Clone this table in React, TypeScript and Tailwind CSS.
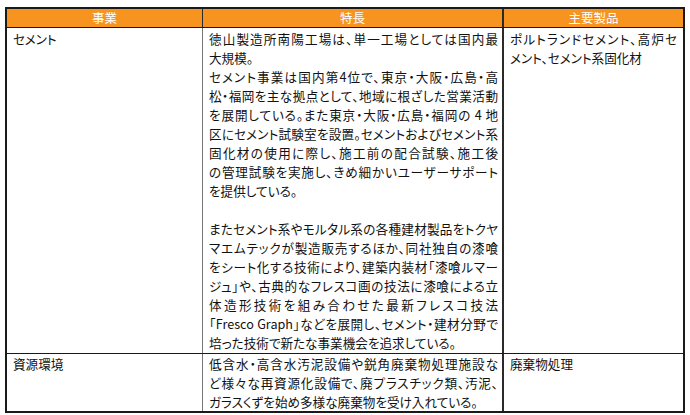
import React from "react";

type Line = { t: string; j?: boolean };

const row1: Line[] = [
  { t: "徳山製造所南陽工場は、単一工場としては国内最", j: true },
  { t: "大規模。" },
  { t: "セメント事業は国内第4位で、東京・大阪・広島・高", j: true },
  { t: "松・福岡を主な拠点として、地域に根ざした営業活動", j: true },
  { t: "を展開している。また東京・大阪・広島・福岡の 4 地", j: true },
  { t: "区にセメント試験室を設置。セメントおよびセメント系", j: true },
  { t: "固化材の使用に際し、施工前の配合試験、施工後", j: true },
  { t: "の管理試験を実施し、きめ細かいユーザーサポート", j: true },
  { t: "を提供している。" },
  { t: "\u00a0" },
  { t: "またセメント系やモルタル系の各種建材製品をトクヤ", j: true },
  { t: "マエムテックが製造販売するほか、同社独自の漆喰", j: true },
  { t: "をシート化する技術により、建築内装材「漆喰ルマー", j: true },
  { t: "ジュ」や、古典的なフレスコ画の技法に漆喰による立", j: true },
  { t: "体造形技術を組み合わせた最新フレスコ技法", j: true },
  { t: "「Fresco Graph」などを展開し、セメント・建材分野で", j: true },
  { t: "培った技術で新たな事業機会を追求している。" },
];

const row2: Line[] = [
  { t: "低含水・高含水汚泥設備や鋭角廃棄物処理施設な", j: true },
  { t: "ど様々な再資源化設備で、廃プラスチック類、汚泥、", j: true },
  { t: "ガラスくずを始め多様な廃棄物を受け入れている。" },
];

function Lines({ lines }: { lines: Line[] }) {
  return (
    <>
      {lines.map((l, i) => (
        <div
          key={i}
          className={
            l.j
              ? "whitespace-nowrap text-justify [text-align-last:justify]"
              : "whitespace-nowrap"
          }
        >
          {l.t}
        </div>
      ))}
    </>
  );
}

export default function App() {
  return (
    <div
      className="w-[690px] h-[415px] bg-white pl-[5px] pt-[7px] text-[12.6px] leading-[19px] text-[#111] [font-feature-settings:'palt']"
      style={{ fontFamily: "'Noto Sans CJK JP', sans-serif" }}
    >
      <div className="w-[680px] border-2 border-[#1a1a1a]">
        {/* header */}
        <div className="flex h-[19px] bg-[#f7941f] text-white border-b border-[#1a1a1a] text-[12.5px] leading-[18px]">
          <div className="w-[196px] shrink-0 border-r border-[#2a2a2a] text-center">事業</div>
          <div className="w-[301px] shrink-0 border-r-2 border-[#2a2a2a] text-center">特長</div>
          <div className="flex-1 text-center">主要製品</div>
        </div>
        {/* row 1 */}
        <div className="flex border-b border-[#1a1a1a]">
          <div className="w-[196px] shrink-0 border-r border-[#777] pl-[6px] pt-[1px]">セメント</div>
          <div className="w-[301px] shrink-0 border-r-2 border-[#2a2a2a] pl-[6px] pr-[4px] pt-[1px] pb-[1px]">
            <Lines lines={row1} />
          </div>
          <div className="flex-1 pl-[6px] pr-[6px] pt-[1px]">
            <div className="whitespace-nowrap text-justify [text-align-last:justify]">ポルトランドセメント、高炉セ</div>
            <div>メント、セメント系固化材</div>
          </div>
        </div>
        {/* row 2 */}
        <div className="flex">
          <div className="w-[196px] shrink-0 border-r border-[#777] pl-[6px]">資源環境</div>
          <div className="w-[301px] shrink-0 border-r-2 border-[#2a2a2a] pl-[6px] pr-[4px]">
            <Lines lines={row2} />
          </div>
          <div className="flex-1 pl-[6px] pr-[6px]">廃棄物処理</div>
        </div>
      </div>
    </div>
  );
}
